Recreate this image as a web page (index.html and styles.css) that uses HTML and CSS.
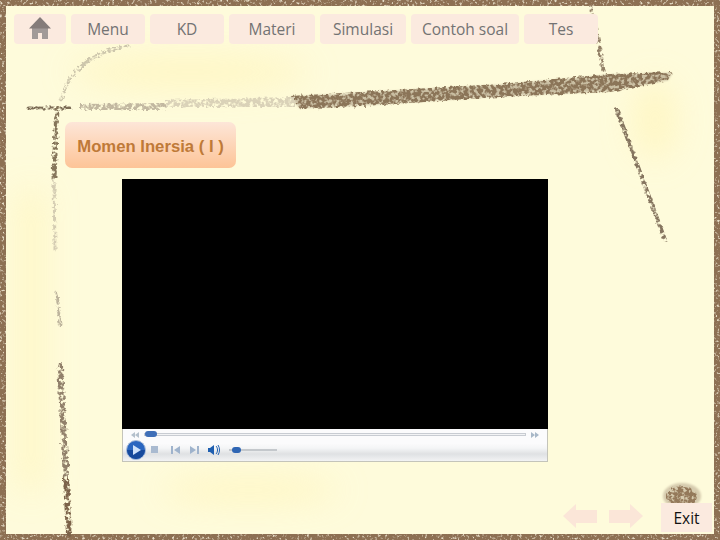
FILE: index.html
```html
<!DOCTYPE html>
<html lang="id">
<head>
<meta charset="utf-8">
<title>Momen Inersia</title>
<link rel="stylesheet" href="styles.css">
</head>
<body>
<div class="slide">
  <svg class="paper" width="720" height="540" viewBox="0 0 720 540" aria-hidden="true">
    <defs>
      <filter id="rough" x="-10%" y="-30%" width="120%" height="160%">
        <feTurbulence type="fractalNoise" baseFrequency="0.28" numOctaves="2" seed="7" result="n"/>
        <feDisplacementMap in="SourceGraphic" in2="n" scale="5" result="d"/>
        <feColorMatrix in="n" values="0 0 0 0 0  0 0 0 0 0  0 0 0 0 0  5 0 0 0 -1.7" result="holes"/>
        <feComposite in="d" in2="holes" operator="in"/>
      </filter>
      <filter id="blur1"><feGaussianBlur stdDeviation="1"/></filter>
      <filter id="mottle" x="0" y="0" width="100%" height="100%">
        <feTurbulence type="fractalNoise" baseFrequency="0.4" numOctaves="2" seed="3"/>
        <feColorMatrix values="0 0 0 0 0.80  0 0 0 0 0.73  0 0 0 0 0.58  4 0 0 0 -2.200"/>
        <feComposite in2="SourceGraphic" operator="in"/>
      </filter>
      <filter id="soft"><feGaussianBlur stdDeviation="16"/></filter>
    </defs>
    <g filter="url(#soft)" fill="#fff5bc" opacity=".7">
      <ellipse cx="190" cy="72" rx="120" ry="18"/>
      <ellipse cx="655" cy="120" rx="22" ry="40"/>
      <rect x="18" y="190" width="26" height="300"/>
      <ellipse cx="250" cy="490" rx="90" ry="14"/>
    </g>
    <g fill="#8d7053">
      <rect x="0" y="0" width="720" height="6"/>
      <rect x="0" y="0" width="6" height="540"/>
      <rect x="714" y="0" width="6" height="540"/>
      <rect x="0" y="534" width="720" height="6"/>
    </g>
    <g filter="url(#mottle)">
      <rect x="0" y="0" width="720" height="6"/>
      <rect x="0" y="0" width="6" height="540"/>
      <rect x="714" y="0" width="6" height="540"/>
      <rect x="0" y="534" width="720" height="6"/>
    </g>
    <g filter="url(#blur1)">
      <path d="M290 97L500 85L610 75L672 73L668 80L610 91L500 96L380 104L300 108Z" fill="#c9bea2"/>
      <ellipse cx="682" cy="496" rx="19" ry="13" fill="#d6cbae"/>
    </g>
    <g filter="url(#rough)" stroke-linecap="round">
      <path d="M290 96L500 84L610 74L672 72L668 80L610 92L500 97L380 105L300 109Z" fill="#8b7558"/>
      <path d="M165 100L295 97L295 107L165 107Z" fill="#dad2b8"/>
      <path d="M80 104L165 103L165 110L80 110Z" fill="#c2b8a0"/>
      <g fill="none">
        <path d="M28 108L70 108" stroke="#7d6d56" stroke-width="3"/>
        <path d="M57 108L54 178" stroke="#85745a" stroke-width="5"/>
        <path d="M61 100C68 72 90 52 128 46" stroke="#cdc6ac" stroke-width="3"/>
        <path d="M54 180L55 250" stroke="#d4ccb2" stroke-width="3"/>
        <path d="M57 293L60 325" stroke="#bdb49c" stroke-width="3"/>
        <path d="M60 365L66 480" stroke="#91806a" stroke-width="6"/>
        <path d="M66 480L69 534" stroke="#7c644a" stroke-width="6"/>
        <path d="M591 8L598 40L604 74" stroke="#927f66" stroke-width="4"/>
        <path d="M617 110L665 240" stroke="#85745e" stroke-width="4"/>
      </g>
      <ellipse cx="682" cy="497" rx="15" ry="11" fill="#94795a"/>
    </g>
  </svg>

  <nav class="nav">
    <a class="btn home" aria-label="Home">
      <svg width="24" height="23" viewBox="0 0 24 23"><path d="M4 10H20V22H14V16H10V22H4Z" fill="#a19a98"/><path d="M12 0L23 11.500H1Z" fill="#847c7a"/></svg>
    </a>
    <a class="btn w74">Menu</a>
    <a class="btn w74">KD</a>
    <a class="btn w86">Materi</a>
    <a class="btn w86">Simulasi</a>
    <a class="btn w108">Contoh soal</a>
    <a class="btn w74">Tes</a>
  </nav>

  <main class="main">
    <h1 class="title">Momen Inersia ( I )</h1>
    <div class="player">
      <div class="screen"></div>
      <div class="controls">
        <div class="seekrow">
          <svg width="10" height="6" viewBox="0 0 10 6"><path d="M5 0V6L1 3ZM9 0V6L5 3Z" fill="#b4c0cc"/></svg>
          <div class="track"><span class="thumb"></span></div>
          <svg width="10" height="6" viewBox="0 0 10 6"><path d="M1 0V6L5 3ZM5 0V6L9 3Z" fill="#a8b8c8"/></svg>
        </div>
        <div class="buttons">
          <svg width="20" height="20" viewBox="0 0 20 20"><circle cx="10" cy="10" r="9.500" fill="#2a66c0" stroke="#a9bcd8"/><path d="M1 10H19A9 9 0 0 1 1 10Z" fill="#174a9c"/><path d="M7 5L15 10L7 15Z" fill="#cfe2fa"/></svg>
          <svg width="8" height="8" viewBox="0 0 8 8"><rect width="7" height="7" fill="#a9bad0"/></svg>
          <svg class="prev" width="9" height="8" viewBox="0 0 9 8"><path d="M0 0H2V8H0ZM9 0V8L3 4Z" fill="#9fb3cc"/></svg>
          <svg class="next" width="9" height="8" viewBox="0 0 9 8"><path d="M9 0H7V8H9ZM0 0V8L6 4Z" fill="#9fb3cc"/></svg>
          <svg class="sound" width="12" height="10" viewBox="0 0 12 10"><path d="M0 3H2L6 0V10L2 7H0Z" fill="#1f5fb0"/><path d="M8 1C10 3 10 7 8 9M10 0C12 3 12 7 10 10" stroke="#1f5fb0" fill="none"/></svg>
          <div class="volume"><span class="knob"></span></div>
        </div>
      </div>
    </div>
  </main>

  <footer class="footer">
    <svg class="arrow" width="34" height="24" viewBox="0 0 34 24"><path d="M0 12L13 0V6H34V19H13V24Z" fill="#fbe6d8"/></svg>
    <svg class="arrow" width="34" height="24" viewBox="0 0 34 24"><path d="M34 12L21 0V6H0V19H21V24Z" fill="#fbe6d8"/></svg>
    <a class="exit">Exit</a>
  </footer>
</div>
</body>
</html>
```
FILE: styles.css
```css
* { box-sizing: border-box; }
html, body { margin: 0; padding: 0; }
body { width: 720px; height: 540px; overflow: hidden; }

.slide {
  position: relative;
  width: 720px;
  height: 540px;
  display: flex;
  flex-direction: column;
  background: #fefbdb;
  font-family: "Open Sans", "Noto Sans", sans-serif;
}
.paper { position: absolute; left: 0; top: 0; }

.nav {
  position: relative;
  display: flex;
  gap: 5px;
  padding: 14px 0 0 14px;
}
.btn {
  height: 30px;
  display: flex;
  align-items: center;
  justify-content: center;
  background: #fbeadf;
  border-radius: 4px;
  color: #737373;
  font-size: 15.500px;
}
.home { width: 52px; padding-bottom: 2px; }
.w74 { width: 74px; }
.w86 { width: 86px; }
.w108 { width: 108px; }

.main {
  position: relative;
  padding: 78px 0 0 65px;
}
.title {
  width: 171px;
  height: 46px;
  margin: 0;
  padding-top: 3px;
  display: flex;
  align-items: center;
  justify-content: center;
  border-radius: 7px;
  background: linear-gradient(#fde6d8, #fdc497);
  color: #bf7a38;
  font: bold 16.700px "Liberation Sans", sans-serif;
}
.player {
  width: 426px;
  margin: 11px 0 0 57px;
}
.screen { height: 250px; background: #000; }
.controls {
  height: 33px;
  border: 1px solid #c4c4ba;
  border-top: 0;
  background: linear-gradient(#fbfbfc 0 45%, #f4f5f6 60%, #dfe1e3 78%, #f2f3f4);
}
.seekrow {
  display: flex;
  align-items: center;
  gap: 4px;
  height: 11px;
  padding: 0 7px;
}
.track {
  flex: 1;
  height: 3px;
  position: relative;
  background: #f2f3f5;
  border: 1px solid #c8ccd2;
}
.thumb {
  position: absolute;
  left: 0;
  top: -3px;
  width: 12px;
  height: 6px;
  border-radius: 3px;
  background: #3f6fb8;
}
.buttons {
  display: flex;
  align-items: center;
  gap: 5px;
  height: 20px;
  padding-left: 3px;
}
.prev { margin-left: 7px; }
.next { margin-left: 5px; }
.sound { margin-left: 4px; }
.volume {
  position: relative;
  width: 48px;
  height: 2px;
  margin-left: 4px;
  background: #c4c8cc;
}
.knob {
  position: absolute;
  left: 3px;
  top: -2px;
  width: 9px;
  height: 6px;
  border-radius: 3px;
  background: #2f66b4;
}

.footer {
  position: relative;
  margin-top: auto;
  display: flex;
  align-items: center;
  gap: 12px;
  justify-content: flex-end;
  padding: 0 8px 8px 0;
}
.arrow { margin-bottom: 3px; }
.exit {
  width: 51px;
  height: 29px;
  margin-left: 6px;
  display: flex;
  align-items: center;
  justify-content: center;
  background: #fbeadf;
  color: #111;
  font-size: 15.500px;
}
```
